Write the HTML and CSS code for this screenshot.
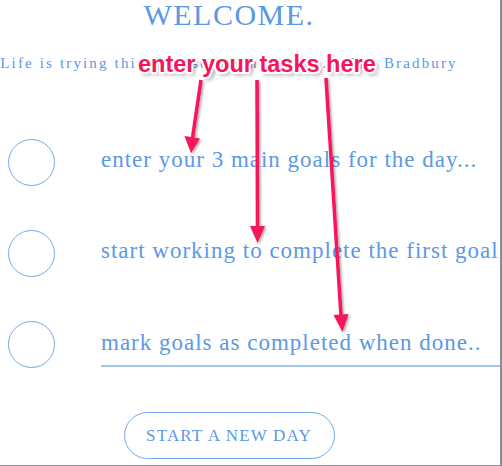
FILE: index.html
```html
<!DOCTYPE html>
<html lang="en">
<head>
    <meta charset="UTF-8">
    <meta name="viewport" content="width=device-width, initial-scale=1.0">
    <title>Three Goals</title>
    <link rel="stylesheet" href="styles.css">
</head>
<body>
    <div class="frame">
        <div class="app">
            <h1 class="app-title">WELCOME.</h1>
            <p class="app-quote">Life is trying things to see if they work. - Ray Bradbury</p>

            <ul class="goal-list">
                <li class="goal">
                    <span class="goal-check"></span>
                    <span class="goal-text">enter your 3 main goals for the day...</span>
                </li>
                <li class="goal">
                    <span class="goal-check"></span>
                    <span class="goal-text">start working to complete the first goal</span>
                </li>
                <li class="goal">
                    <span class="goal-check"></span>
                    <span class="goal-text goal-text--active">mark goals as completed when done..</span>
                </li>
            </ul>

            <div class="actions">
                <button type="button" class="new-day-btn">START A NEW DAY</button>
            </div>
        </div>

        <!-- screenshot annotation -->
        <div class="callout">enter your tasks here</div>
        <svg class="callout-arrows" width="502" height="466" viewBox="0 0 502 466">
            <defs>
                <filter id="shadow" x="-50%" y="-10%" width="200%" height="120%">
                    <feDropShadow dx="1.5" dy="1.5" stdDeviation="1.2" flood-color="#000" flood-opacity="0.35"/>
                </filter>
            </defs>
            <g fill="#f7145a" stroke="#f7145a" filter="url(#shadow)">
                <line x1="201" y1="80" x2="192.5" y2="138" stroke-width="3.5"/>
                <polygon points="184.5,136 200,138.5 191,153" stroke="none"/>
                <line x1="257" y1="80" x2="257.5" y2="228" stroke-width="3.5"/>
                <polygon points="250,226 265,226 257.5,243" stroke="none"/>
                <line x1="326" y1="78" x2="341" y2="316" stroke-width="3.5"/>
                <polygon points="333.5,315 348.5,314 342.5,332" stroke="none"/>
            </g>
        </svg>
    </div>
</body>
</html>
```

FILE: styles.css
```css
* {
    margin: 0;
    padding: 0;
    box-sizing: border-box;
}

body {
    font-family: 'Liberation Serif', 'Times New Roman', serif;
    background: #fff;
    color: #5b98e6;
}

.frame {
    position: relative;
    width: 502px;
    height: 466px;
    overflow: hidden;
    border-right: 2px solid #8b8d92;
    border-bottom: 1px solid #8b8d92;
}

.app {
    width: 458px;
}

.app-title {
    font-size: 30px;
    line-height: 30px;
    font-weight: 400;
    letter-spacing: 1.5px;
    text-align: center;
}

.app-quote {
    margin-top: 24px;
    font-size: 15px;
    line-height: 18px;
    letter-spacing: 2.15px;
    text-align: center;
    white-space: nowrap;
}

.goal-list {
    list-style: none;
    margin-top: 67px;
    width: 500px;
}

.goal {
    display: flex;
    align-items: center;
    gap: 46px;
    height: 47px;
    margin-bottom: 44px;
    padding-left: 8px;
}

.goal-check {
    flex: none;
    width: 47px;
    height: 47px;
    border: 1px solid #72a9ee;
    border-radius: 50%;
}

.goal-text {
    flex: 1;
    font-size: 23px;
    letter-spacing: 1px;
    white-space: nowrap;
    line-height: 42px;
    padding-bottom: 5px;
}

.goal-text--active {
    padding-bottom: 1px;
    border-bottom: 2px solid #a3c6ee;
}

.actions {
    display: flex;
    justify-content: center;
}

.new-day-btn {
    width: 211px;
    height: 47px;
    border: 1px solid #72a9ee;
    border-radius: 24px;
    background: #fff;
    color: #5b98e6;
    font-family: 'Liberation Serif', 'Times New Roman', serif;
    font-size: 17px;
    letter-spacing: 1.2px;
    cursor: pointer;
}

.callout {
    position: absolute;
    left: 138px;
    top: 50px;
    font-family: 'Liberation Sans', Arial, sans-serif;
    font-size: 23.5px;
    font-weight: 700;
    line-height: 28px;
    color: #f7145a;
    white-space: nowrap;
    text-shadow:
        -1.5px -1.5px 0 #fff, 1.5px -1.5px 0 #fff,
        -1.5px 1.5px 0 #fff, 1.5px 1.5px 0 #fff,
        0 -2px 0 #fff, 0 2px 0 #fff, -2px 0 0 #fff, 2px 0 0 #fff,
        3px 3px 4px rgba(0, 0, 0, 0.45);
}

.callout-arrows {
    position: absolute;
    left: 0;
    top: 0;
    pointer-events: none;
}
```
